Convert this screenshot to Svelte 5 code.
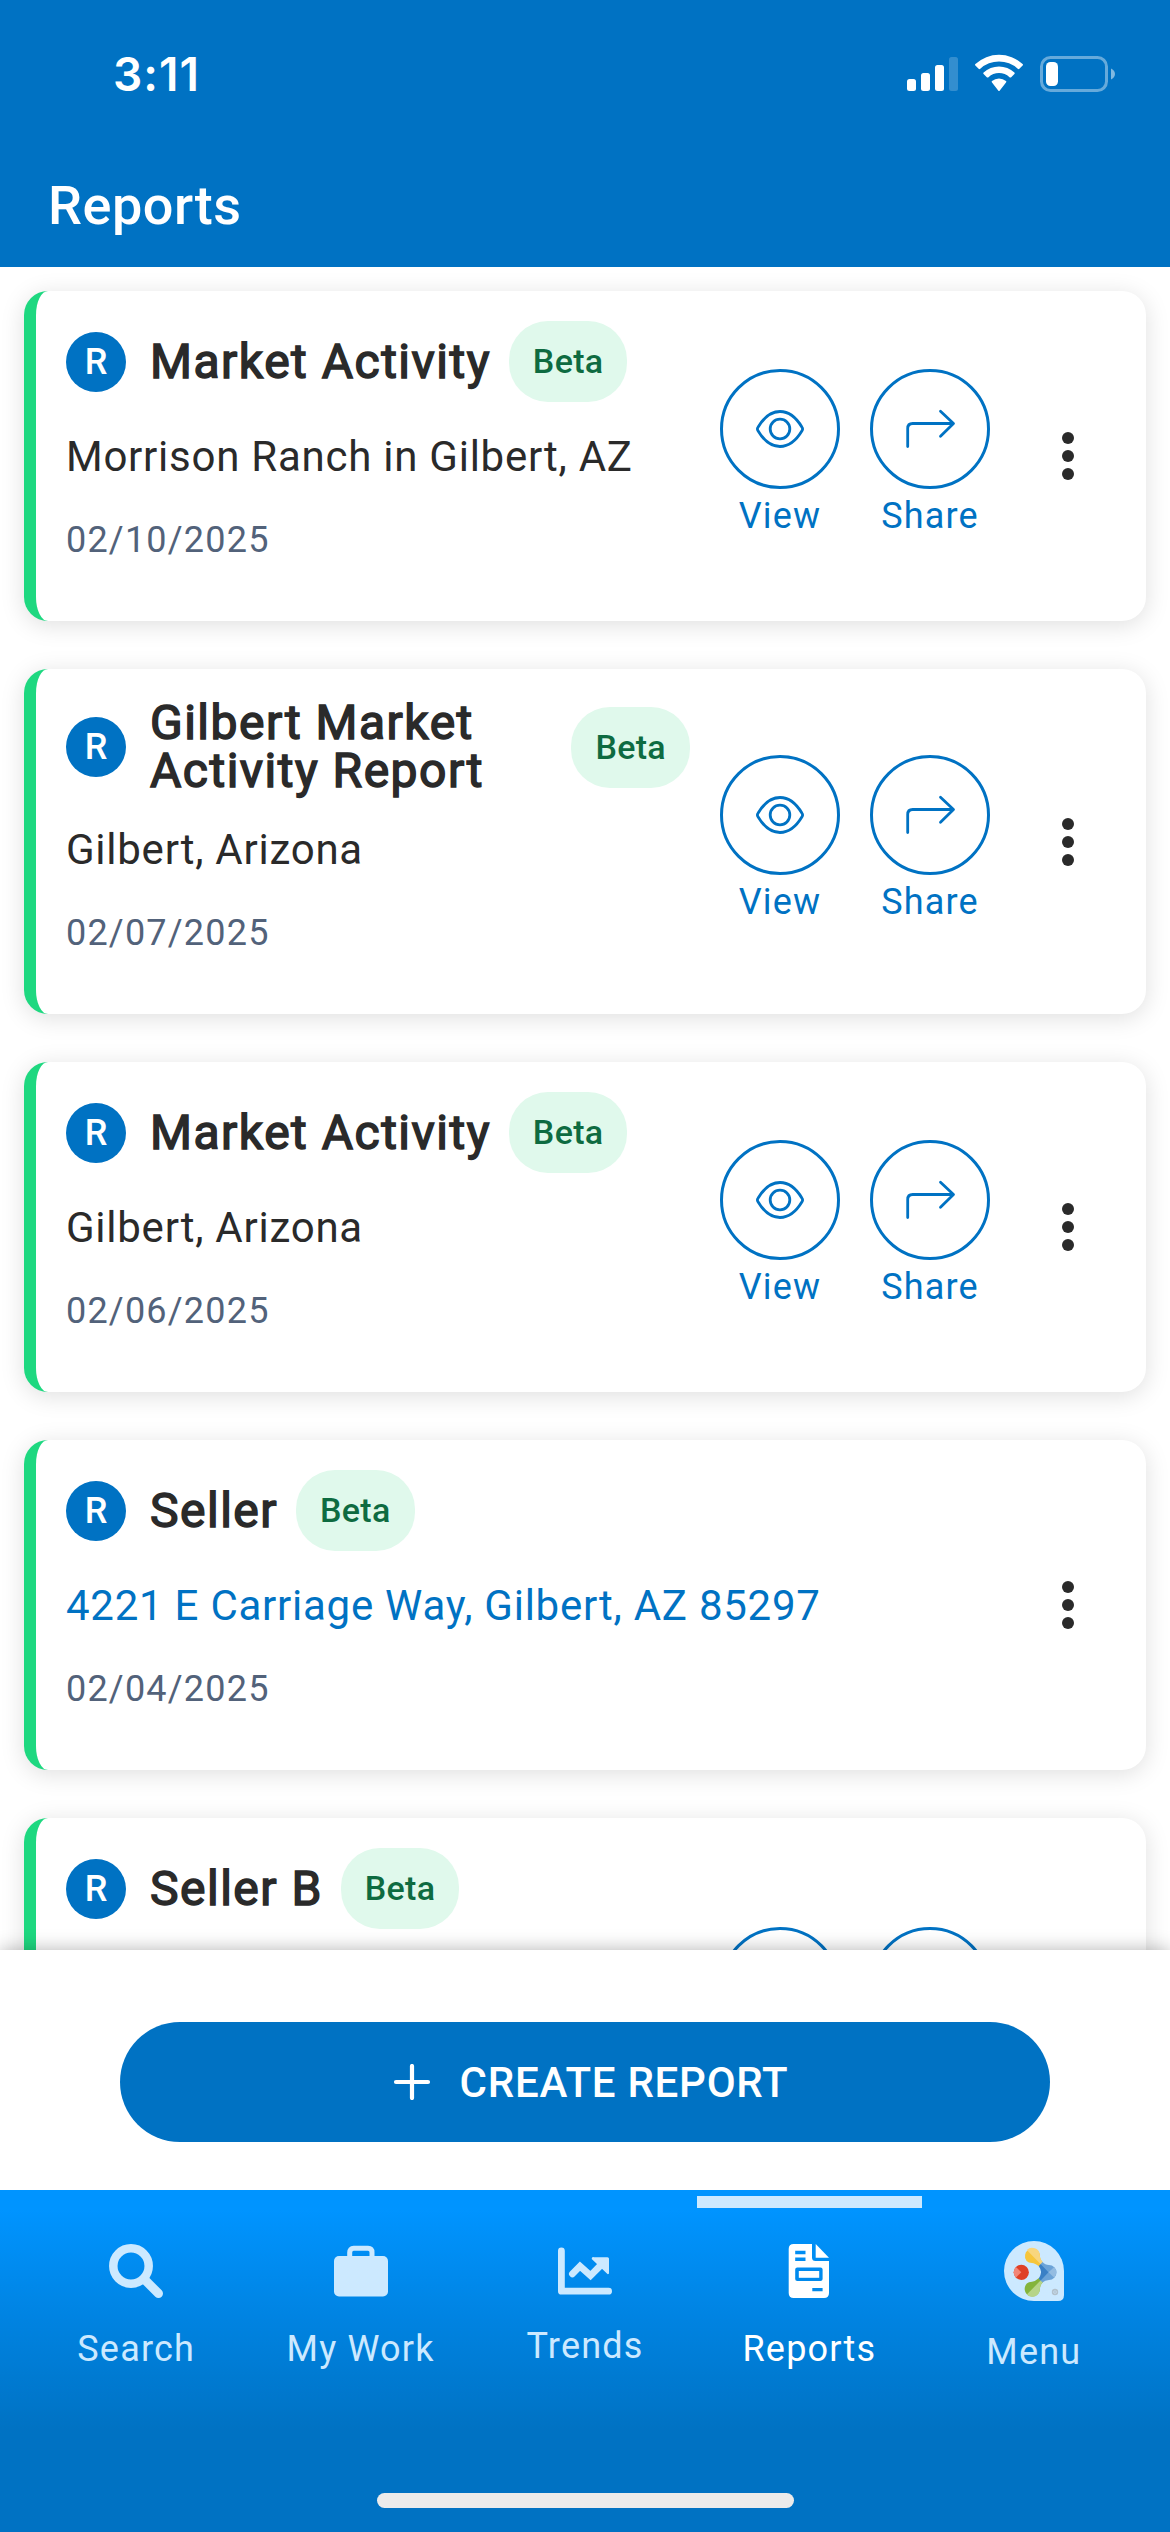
<script lang="ts">
    interface Report {
        title: string;
        place?: string;
        date?: string;
        isLink?: boolean;
        hasActions: boolean;
    }

    const reports: Report[] = [
        { title: 'Market Activity', place: 'Morrison Ranch in Gilbert, AZ', date: '02/10/2025', hasActions: true },
        { title: 'Gilbert Market Activity Report', place: 'Gilbert, Arizona', date: '02/07/2025', hasActions: true },
        { title: 'Market Activity', place: 'Gilbert, Arizona', date: '02/06/2025', hasActions: true },
        { title: 'Seller', place: '4221 E Carriage Way, Gilbert, AZ 85297', date: '02/04/2025', isLink: true, hasActions: false },
        { title: 'Seller B', hasActions: true }
    ];

    const tabs = ['Search', 'My Work', 'Trends', 'Reports', 'Menu'];
    let active = $state('Reports');
</script>

<div class="screen">
    <header class="top">
        <div class="status-bar">
            <span class="time">3:11</span>
            <svg class="status-icons" width="210" height="40" viewBox="0 0 210 40" fill="#fff">
                <rect x="1" y="25" width="9" height="12" rx="2.5" />
                <rect x="15" y="19" width="9" height="18" rx="2.5" />
                <rect x="29" y="11" width="9" height="26" rx="2.5" />
                <rect x="43" y="3" width="9" height="34" rx="2.5" opacity="0.2" />
                <path d="M69.4 11.6a1 1 0 0 1 0-1.5a34.5 34.5 0 0 1 47.2 0a1 1 0 0 1 0 1.5l-3.2 3.2a1.3 1.3 0 0 1-1.7 0a27.5 27.5 0 0 0-37.4 0a1.3 1.3 0 0 1-1.7 0z" />
                <path d="M77.6 20a1 1 0 0 1 0-1.500a22.5 22.5 0 0 1 30.8 0a1 1 0 0 1 0 1.5l-3.2 3.2a1.3 1.3 0 0 1-1.7 0a15.5 15.5 0 0 0-21 0a1.3 1.3 0 0 1-1.7 0z" />
                <path d="M86 28.4a1 1 0 0 1 0-1.5a11 11 0 0 1 14 0a1 1 0 0 1 0 1.5l-6.2 8.1a1 1 0 0 1-1.6 0z" />
                <rect x="135.5" y="3.500" width="65" height="33" rx="9" fill="none" stroke="#fff" stroke-width="3" opacity="0.4" />
                <rect x="140" y="8" width="12" height="24" rx="4.5" />
                <path d="M205 14.5c2.4 1 4 3 4 5.5s-1.6 4.5-4 5.5z" opacity="0.5" />
            </svg>
        </div>
        <h1>Reports</h1>
    </header>

    <main class="list">
        {#each reports as report}
            <article class="card" class:pending={!report.place}>
                <div class="info">
                    <div class="title-row">
                        <span class="avatar">R</span>
                        <h2>{report.title}</h2>
                        <span class="beta">Beta</span>
                    </div>
                    {#if report.place}
                        <p class="place" class:link={report.isLink}>{report.place}</p>
                        <p class="date">{report.date}</p>
                    {/if}
                </div>
                {#if report.hasActions}
                    <div class="actions">
                        <button class="action" aria-label="View">
                            <span class="circle">
                                <svg width="54" height="54" viewBox="0 0 54 54">
                                    <path d="M5 25.2C10.5 16 18.5 9.5 27 9.5S43.5 16 49 25.2a3.300 3.300 0 0 1 0 3.6C43.5 38 35.5 44.5 27 44.5S10.5 38 5 28.8a3.3 3.3 0 0 1 0-3.6z" />
                                    <circle cx="27" cy="27" r="9.8" />
                                </svg>
                            </span>
                            {#if report.place}<span>View</span>{/if}
                        </button>
                        <button class="action" aria-label="Share">
                            <span class="circle">
                                <svg width="54" height="54" viewBox="0 0 54 54">
                                    <path d="M4.7 44.5V26.5q0-5 5-5H50M37.5 9.2L50.5 21.5L37.5 34.2" />
                                </svg>
                            </span>
                            {#if report.place}<span>Share</span>{/if}
                        </button>
                    </div>
                {/if}
                <button class="more" aria-label="More">
                    <span></span><span></span><span></span>
                </button>
            </article>
        {/each}
    </main>

    <section class="create-bar">
        <button class="create">
            <svg width="60" height="36" viewBox="0 0 60 36" stroke="#fff" stroke-width="4.2" stroke-linecap="round">
                <path d="M30 2V34M14 18H46" />
            </svg>
            <span>CREATE REPORT</span>
        </button>
    </section>

    <nav>
        <div class="tabs">
            {#each tabs as tab}
                <button class="tab" class:active={active === tab} onclick={() => (active = tab)}>
                    {#if tab === 'Search'}
                        <svg width="54" height="54" viewBox="0 0 54 54" fill="none" stroke="currentColor">
                            <circle cx="22" cy="22" r="17.7" stroke-width="8.5" />
                            <path d="M35 35L49.5 49.5" stroke-width="9" stroke-linecap="round" />
                        </svg>
                    {:else if tab === 'My Work'}
                        <svg width="54" height="54" viewBox="0 0 54 54" fill="currentColor">
                            <rect y="12" width="54" height="40.5" rx="5" />
                            <path d="M15.7 14V8.500Q15.7 4.3 19.7 4.3H34Q38 4.3 38 8.5V14" fill="none" stroke="currentColor" stroke-width="5" />
                        </svg>
                    {:else if tab === 'Trends'}
                        <svg width="54" height="48" viewBox="0 0 54 48" fill="none" stroke="currentColor" stroke-width="6.8" stroke-linecap="round" stroke-linejoin="round">
                            <path d="M3.4 3.8V44.2H50.6" />
                            <path d="M14.4 26.8L22 19.2L32.5 28.6L42 19" stroke-linejoin="miter" />
                            <path d="M36 10.2H49.500a1.5 1.5 0 0 1 1.5 1.5V26a1 1 0 0 1-1.8.7L34.5 12.8a1.5 1.5 0 0 1 1.5-2.6z" fill="currentColor" stroke="none" />
                        </svg>
                    {:else if tab === 'Reports'}
                        <svg width="54" height="54" viewBox="0 0 54 54" fill="currentColor">
                            <path fill-rule="evenodd" d="M11.7 0H30V13.5Q30 17 33.5 17H47V49Q47 54 42 54H11.7Q6.7 54 6.7 49V5Q6.7 0 11.7 0zM13.2 6.8V10.2H23.5V6.8zM13.2 13.5V17H23.5V13.5zM15.3 23.5Q13.2 23.5 13.2 25.5V35Q13.2 37 15.3 37H38.5Q40.6 37 40.6 35V25.5Q40.6 23.5 38.5 23.5zM30.3 44V47.2H40.6V44z" />
                            <path d="M33.7 0L47 13.7H33.7z" />
                            <rect x="16.8" y="27" width="20.4" height="6.8" />
                        </svg>
                    {:else}
                        <svg width="60" height="60" viewBox="0 0 60 60">
                            <path d="M30 0A30 30 0 0 1 60 30V54Q60 60 54 60H30A30 30 0 0 1 30 0z" fill="#cce9ff" />
                            <circle cx="17.3" cy="31.3" r="7.6" fill="#df4026" />
                            <path d="M17.3 31.3L11.9 25.9A7.6 7.6 0 0 0 11.9 36.7z" fill="#f28678" />
                            <path d="M22.6 20A7.6 7.6 0 1 1 35.8 13Q35.8 18.5 39 21.5L35 25.5Q31 22 28 22Q24.5 22 22.6 20z" fill="#f6c63c" />
                            <path d="M22.8 9A7.6 7.6 0 0 1 35.8 14Q35.8 18.5 39 21.5L37 23.5z" fill="#f8d67d" />
                            <path d="M22.8 42.6Q24.5 41 28 40.8Q31 40.5 35 37L39 41Q35.8 44 35.8 49A7.6 7.6 0 1 1 22.8 42.6z" fill="#84b43c" />
                            <path d="M37 39L39 41Q35.8 44 35.8 49A7.6 7.6 0 0 1 22.8 53.5z" fill="#b6d488" />
                            <path d="M38.5 21Q41 24 45 24A7.5 7.5 0 0 1 45 39Q41 39 38.5 41.500L34.8 37.8Q39.500 31 34.8 25z" fill="#6ba3d8" />
                            <path d="M36.8 23.2L44.5 31.3L36.7 39.6L34.8 37.8Q39.5 31 34.8 25z" fill="#3a80c6" />
                            <path d="M44.5 31.3L50.3 26Q54.3 31.3 50.3 36.8z" fill="#93bce2" />
                            <circle cx="51" cy="51" r="2.4" fill="none" stroke="#b3c1cc" stroke-width="1.6" />
                            <circle cx="51" cy="51" r="1" fill="#b3c1cc" />
                        </svg>
                    {/if}
                    <span>{tab}</span>
                </button>
            {/each}
        </div>
        <div class="home-indicator"></div>
    </nav>
</div>

<style>
    .screen {
        width: 1170px;
        height: 2532px;
        display: flex;
        flex-direction: column;
        overflow: hidden;
        background: #fff;
        color: #2a2a2a;
        font-family: Roboto, 'Liberation Sans', sans-serif;
    }

    button {
        border: none;
        margin: 0;
        padding: 0;
        background: none;
        font: inherit;
        color: inherit;
        cursor: pointer;
    }

    h1, h2, p {
        margin: 0;
    }

    svg {
        display: block;
    }

    .top {
        flex: none;
        height: 267px;
        background: #0072c3;
        color: #fff;
    }

    .status-bar {
        height: 141px;
        padding: 7px 54px 0 113px;
        box-sizing: border-box;
        display: flex;
        align-items: center;
        justify-content: space-between;
    }

    .time {
        font-family: Inter, sans-serif;
        font-size: 46px;
        font-weight: 600;
        letter-spacing: 1px;
    }

    h1 {
        padding-left: 48px;
        font-size: 54px;
        line-height: 130px;
        font-weight: 500;
        letter-spacing: 0.5px;
    }

    .list {
        flex: 1;
        min-height: 0;
        overflow: hidden;
        display: flex;
        flex-direction: column;
        gap: 48px;
        padding: 24px 24px 0;
    }

    .card {
        flex: none;
        display: flex;
        align-items: center;
        border-left: 12px solid #1ed880;
        border-radius: 24px;
        background: #fff;
        box-shadow: 0 4px 24px rgba(0, 0, 0, 0.13);
    }

    .card.pending {
        height: 391px;
    }

    .pending .info {
        align-self: flex-start;
    }

    .info {
        flex: 1;
        min-width: 0;
        padding: 30px;
    }

    .title-row {
        display: flex;
        align-items: center;
    }

    .avatar {
        flex: none;
        width: 60px;
        height: 60px;
        margin-right: 24px;
        border-radius: 50%;
        background: #0072c3;
        color: #fff;
        font-size: 36px;
        font-weight: 500;
        line-height: 60px;
        text-align: center;
    }

    h2 {
        font-size: 48px;
        line-height: 48px;
        font-weight: 400;
        letter-spacing: 1.5px;
        -webkit-text-stroke: 1.5px #2a2a2a;
    }

    .beta {
        flex: none;
        margin-left: 18px;
        padding: 24px;
        border-radius: 39px;
        background: #e0f9ec;
        color: #0e6b41;
        font-size: 34px;
        line-height: 33px;
        font-weight: 500;
        letter-spacing: 0.3px;
    }

    .place {
        margin-top: 25px;
        height: 60px;
        font-size: 42px;
        line-height: 60px;
        letter-spacing: 0.75px;
    }

    .place.link {
        color: #0072c3;
    }

    .date {
        margin: 26px 0 24px;
        height: 54px;
        font-size: 36px;
        line-height: 54px;
        letter-spacing: 1.2px;
        color: #52627a;
    }

    .actions {
        display: flex;
        gap: 30px;
        color: #0072c3;
    }

    .action {
        width: 120px;
        height: 174px;
        display: flex;
        flex-direction: column;
        align-items: center;
        font-size: 36px;
        line-height: 54px;
        letter-spacing: 1.2px;
        white-space: nowrap;
    }

    .circle {
        width: 120px;
        height: 120px;
        box-sizing: border-box;
        display: flex;
        align-items: center;
        justify-content: center;
        border: 3px solid #0072c3;
        border-radius: 50%;
    }

    .circle svg {
        fill: none;
        stroke: #0072c3;
        stroke-width: 2.8;
        stroke-linecap: round;
        stroke-linejoin: round;
    }

    .more {
        width: 156px;
        display: flex;
        flex-direction: column;
        align-items: center;
        gap: 6px;
    }

    .more span {
        width: 12px;
        height: 12px;
        border-radius: 50%;
        background: #2a2a2a;
    }

    .create-bar {
        flex: none;
        z-index: 1;
        height: 240px;
        box-sizing: border-box;
        padding: 72px 120px 48px;
        background: #fff;
        box-shadow: 0 0 18px rgba(0, 0, 0, 0.3);
    }

    .create {
        width: 100%;
        height: 120px;
        display: flex;
        align-items: center;
        justify-content: center;
        gap: 18px;
        border-radius: 60px;
        background: #0072c3;
        color: #fff;
        font-size: 42px;
        font-weight: 500;
        letter-spacing: 0.75px;
    }

    nav {
        flex: none;
        z-index: 2;
        height: 342px;
        display: flex;
        flex-direction: column;
        justify-content: space-between;
        align-items: center;
        background: linear-gradient(#0094ff 0, #0094ff 20px, #0072c3 240px);
    }

    .tabs {
        width: 1122px;
        height: 240px;
        display: flex;
    }

    .tab {
        flex: 1;
        height: 240px;
        display: flex;
        flex-direction: column;
        align-items: center;
        justify-content: center;
        gap: 24px;
        color: #cce9ff;
        font-size: 36px;
        line-height: 54px;
        letter-spacing: 1.2px;
    }

    .tab.active {
        background: linear-gradient(#cce9ff, #cce9ff) 0 6px / 100% 12px no-repeat;
        color: #fff;
    }

    .home-indicator {
        width: 417px;
        height: 15px;
        margin-bottom: 24px;
        border-radius: 8px;
        background: #ebebeb;
    }
</style>
